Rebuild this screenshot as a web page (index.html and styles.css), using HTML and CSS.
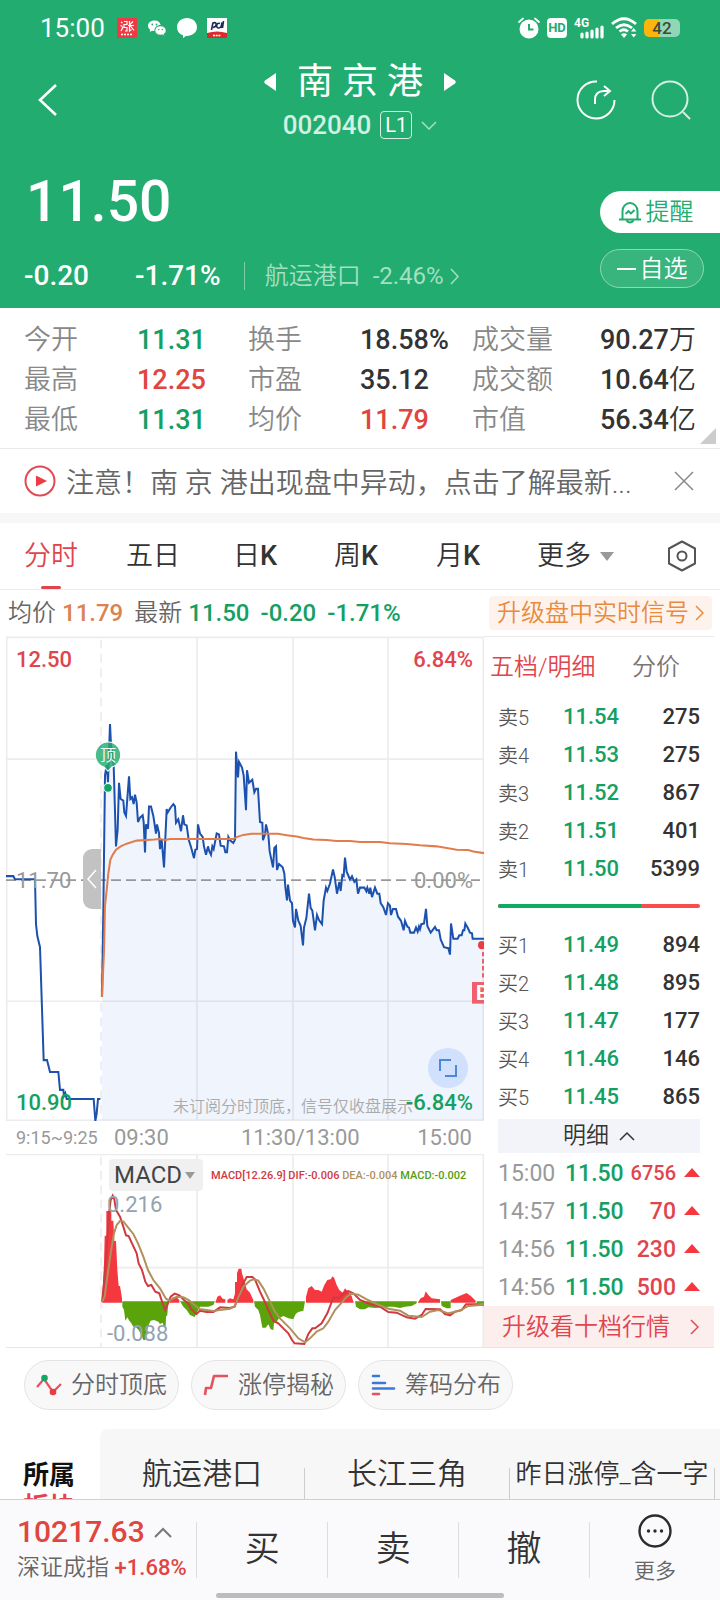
FILE: index.html
```html
<!DOCTYPE html>
<html lang="zh-CN">
<head>
    <meta charset="UTF-8">
    <meta name="viewport" content="width=device-width, initial-scale=1.0">
    <title>南京港 002040</title>
    <link rel="stylesheet" href="styles.css">
</head>
<body>
    <header class="header">
        <!-- Status bar -->
        <div class="status-bar">
            <span class="status-time">15:00</span>
            <svg width="20" height="20" viewBox="0 0 20 20">
                <rect width="20" height="20" fill="#ee3a43"/>
                <path d="M4 4l1.500 1M3.500 7.500l2 1M4 13l2-4M7 3.500h3v3H7v3h3v3.500H8M12.500 3v10l2-1.500M11 7.500h6M16 3.500l-3 3M13.500 8l3.500 4.500" fill="none" stroke="#fff" stroke-width="1.200"/>
                <path d="M4 16.500h12" stroke="#fff" stroke-width="1.500" stroke-dasharray="2 1"/>
            </svg>
            <svg width="20" height="20" viewBox="0 0 20 20">
                <path d="M7.500 2.500c-4 0-6.500 2.500-6.500 5.300 0 1.700.9 3.100 2.300 4.100l-.6 2.100 2.400-1.200c.8.200 1.600.3 2.400.3-.2-3.600 2.400-6 6.200-6C13.200 4.400 10.900 2.500 7.500 2.500z" fill="#fff"/>
                <path d="M13.500 8c-3.200 0-5.500 2-5.500 4.500S10.300 17 13.500 17c.7 0 1.300-.1 1.900-.3l2 1.100-.5-1.900c1.300-.8 2.100-2 2.100-3.400C19 10 16.700 8 13.500 8z" fill="#fff" stroke="#22ac6f" stroke-width=".6"/>
                <g fill="#22ac6f"><circle cx="5.300" cy="6.500" r=".9"/><circle cx="9.500" cy="6.500" r=".9"/><circle cx="11.800" cy="11.500" r=".7"/><circle cx="15.300" cy="11.500" r=".7"/></g>
            </svg>
            <svg width="20" height="20" viewBox="0 0 20 20">
                <path d="M10 0C4.500 0 0 3.900 0 9c0 4 2.400 7 6 8.300V20l3-2c6 .3 11-3.500 11-9 0-5.100-4.500-9-10-9z" fill="#fff"/>
            </svg>
            <svg width="20" height="20" viewBox="0 0 20 20">
                <rect width="20" height="20" fill="#fff"/>
                <path d="M0 15q10-3 20 0v5H0z" fill="#dc2b2b"/>
                <path d="M4.500 12l1.500-7.500M6 5c4-2 4.500 4 0 4.500M13 5.500c-4-1.500-4.500 5-1 4.500 2 0 2.500-2 3-5.500L14 10M16.500 3l-1 7" fill="none" stroke="#1b2a58" stroke-width="1.600"/>
                <path d="M6 17.500h8" stroke="#fff" stroke-width="1.500" stroke-dasharray="2 .7"/>
            </svg>
            <div class="status-right">
                <svg width="22" height="22" viewBox="0 0 22 22">
                    <circle cx="11" cy="12" r="9.500" fill="#fff"/>
                    <path d="M1 5l4-3.500M21 5l-4-3.500" stroke="#fff" stroke-width="1.800" stroke-linecap="round"/>
                    <path d="M11 7v5.500h4.500" fill="none" stroke="#22ac6f" stroke-width="2"/>
                </svg>
                <span class="hd-badge">HD</span>
                <svg width="30" height="22" viewBox="0 0 30 22">
                    <text x="0" y="10" class="net-label">4G</text>
                    <path d="M8 17v3M13 16v4M18 14v6M23 12v8M28 10v10" stroke="#fff" stroke-width="3.200" stroke-linecap="round"/>
                </svg>
                <svg width="26" height="22" viewBox="0 0 26 22">
                    <path d="M1 7Q13-3.500 25 7M5 11Q13 4.500 21 11M8.500 14.500Q13 11 17 14.500" fill="none" stroke="#fff" stroke-width="2.800"/>
                    <path d="M10 17.500q3-2.500 6 0l-3 3.500z" fill="#fff"/>
                    <path d="M20 14.500l2.700-3.500 2.700 3.500zM20 17l2.700 3.500 2.700-3.500z" fill="#fff"/>
                </svg>
                <span class="battery">42</span>
            </div>
        </div>

        <!-- Stock title -->
        <div class="title-bar">
            <button class="icon-btn back-btn" aria-label="返回">
                <svg width="20" height="34" viewBox="0 0 20 34"><path d="M18 2L2 17l16 15" fill="none" stroke="#fff" stroke-width="2.600"/></svg>
            </button>
            <div class="title-center">
                <div class="title-name">
                    <button class="icon-btn" aria-label="上一只">
                        <svg width="12" height="18" viewBox="0 0 12 18"><path d="M12 0v18L1 10.500q-1.500-1.500 0-3z" fill="#fff"/></svg>
                    </button>
                    <h1>南 京 港</h1>
                    <button class="icon-btn" aria-label="下一只">
                        <svg width="12" height="18" viewBox="0 0 12 18"><path d="M0 0v18l11-7.500q1.500-1.500 0-3z" fill="#fff"/></svg>
                    </button>
                </div>
                <div class="title-code">
                    <span>002040</span>
                    <span class="level-tag">L1</span>
                    <svg width="16" height="9" viewBox="0 0 16 9"><path d="M1 1l7 7 7-7" fill="none" stroke="#a5dfc4" stroke-width="1.500"/></svg>
                </div>
            </div>
            <div class="title-actions">
                <button class="icon-btn" aria-label="分享">
                    <svg width="40" height="40" viewBox="0 0 40 40" fill="none" stroke="#fff" stroke-width="2">
                        <path d="M21 1.500A18.500 18.500 0 1 0 38.500 20"/>
                        <path d="M19 24v-4q0-9 9-9h6M28 6l6 5-6 5"/>
                    </svg>
                </button>
                <button class="icon-btn" aria-label="搜索">
                    <svg width="40" height="40" viewBox="0 0 40 40" fill="none" stroke="#d3f0e2" stroke-width="2">
                        <circle cx="19" cy="19" r="17.500"/><path d="M32 32l7 7"/>
                    </svg>
                </button>
            </div>
        </div>

        <!-- Latest price -->
        <div class="quote">
            <div class="quote-left">
                <div class="price">11.50</div>
                <div class="change-row">
                    <span class="change">-0.20</span>
                    <span class="change-pct">-1.71%</span>
                    <a href="#" class="industry">航运港口 <span>-2.46%</span>
                        <svg width="9" height="17" viewBox="0 0 9 17"><path d="M1 1l7 7.500L1 16" fill="none" stroke="#a5dfc4" stroke-width="1.500"/></svg>
                    </a>
                </div>
            </div>
            <div class="quote-actions">
                <button class="remind-btn">
                    <svg width="22" height="23" viewBox="0 0 22 23" fill="none" stroke="#22ac6f" stroke-width="2">
                        <path d="M3.500 18v-8a7.500 8 0 0 1 15 0v8M0 18.500h22M7.500 19.500q3.500 4 7 0"/>
                        <path d="M6.500 13l3-3 2.500 2.500L15.500 9" stroke-width="1.800"/>
                    </svg>
                    提醒
                </button>
                <button class="watch-btn"><i class="minus"></i>自选</button>
            </div>
        </div>
    </header>

    <main class="content">
        <dl class="stats">
            <dt>今开</dt><dd class="down">11.31</dd>
            <dt>换手</dt><dd>18.58%</dd>
            <dt>成交量</dt><dd>90.27<span>万</span></dd>
            <dt>最高</dt><dd class="up">12.25</dd>
            <dt>市盈</dt><dd>35.12</dd>
            <dt>成交额</dt><dd>10.64<span>亿</span></dd>
            <dt>最低</dt><dd class="down">11.31</dd>
            <dt>均价</dt><dd class="up">11.79</dd>
            <dt>市值</dt><dd>56.34<span>亿</span></dd>
        </dl>

        <div class="notice">
            <svg width="32" height="32" viewBox="0 0 32 32">
                <circle cx="16" cy="16" r="14.500" fill="none" stroke="#e04a52" stroke-width="2"/>
                <path d="M12 10.500l11 5.500-11 5.500z" fill="#ee3a43"/>
            </svg>
            <a href="#">注意！南 京 港出现盘中异动，点击了解最新...</a>
            <button class="icon-btn" aria-label="关闭">
                <svg width="20" height="20" viewBox="0 0 20 20"><path d="M1 1l18 18M19 1L1 19" stroke="#888" stroke-width="1.500"/></svg>
            </button>
        </div>

        <!-- Period tabs -->
        <nav class="tabs">
            <button class="active">分时</button>
            <button>五日</button>
            <button>日<span>K</span></button>
            <button>周<span>K</span></button>
            <button>月<span>K</span></button>
            <button>更多<i class="caret"></i></button>
            <button aria-label="设置">
                <svg width="30" height="32" viewBox="0 0 30 32" fill="none" stroke="#555" stroke-width="2">
                    <path d="M15 1.500L28 8.500v15L15 30.500 2 23.500v-15z" stroke-linejoin="round"/><circle cx="15" cy="16" r="4.500"/>
                </svg>
            </button>
        </nav>

        <div class="info-row">
            <span>均价</span><b class="avg">11.79</b>
            <span>最新</span><b class="down">11.50</b><b class="down">-0.20</b><b class="down">-1.71%</b>
            <a href="#" class="signal-link">升级盘中实时信号
                <svg width="9" height="16" viewBox="0 0 9 16"><path d="M1 1l7 7-7 7" fill="none" stroke="#e98a3c" stroke-width="1.500"/></svg>
            </a>
        </div>

        <div class="board">
            <section class="charts">
                <!-- Intraday price -->
                <div class="price-chart">
                    <svg class="plot" viewBox="18 18 1434 1434" preserveAspectRatio="none">
                        <g class="grid-line">
                            <path d="M20 22H1450V1450H20zM20 382H1450M20 1098H1450M591 22V1450M879 22V1450M1164 22V1450"/>
                            <path d="M303 28V1450" stroke-dasharray="26 17"/>
                        </g>
                        <path class="zero-line" d="M18 740H1440"/>
                        <path class="area" d="M306 1085L310 830 315 430 320 400 324 450 330 278 333 340 341 400 348 640 353 590 357 452 362 500 370 505 373 540 378 550 387 433 391 500 396 495 401 515 405 487 410 510 414 568 420 555 428 548 431 568 435 658 438 575 444 588 447 522 453 522 460 550 468 602 471 575 477 600 480 648 485 620 492 702 500 530 512 525 520 515 525 522 528 570 535 560 543 595 549 548 553 575 560 578 566 620 573 642 582 675 591 648 594 575 600 602 608 612 618 665 624 640 633 665 637 640 641 648 650 602 657 605 662 638 672 640 681 657 685 612 690 622 700 630 705 620 708 360 714 436 717 390 726 407 731 430 738 533 741 415 747 452 757 443 763 480 774 470 780 568 787 570 789 622 798 575 805 605 809 655 819 702 828 640 831 710 837 692 848 702 853 720 861 800 864 753 870 800 876 808 885 880 888 825 895 860 902 875 909 933 912 880 919 852 927 780 932 822 937 830 945 888 951 843 957 858 966 870 971 800 978 762 982 772 990 750 999 708 1011 780 1018 745 1022 772 1027 725 1031 728 1035 673 1040 715 1050 738 1056 728 1063 745 1069 738 1074 780 1080 762 1093 762 1108 780 1111 762 1116 790 1125 762 1138 780 1142 808 1158 843 1164 808 1173 843 1179 825 1188 825 1194 848 1203 860 1211 888 1215 860 1231 895 1242 895 1257 877 1272 868 1278 825 1282 875 1292 895 1305 878 1317 888 1322 915 1332 938 1345 941 1350 960 1353 868 1360 913 1373 913 1389 888 1396 868 1404 882 1416 897 1418 913 1452 913V1450H306z"/>
                        <polyline class="price-line" points="18,728 40,728 45,737 105,737 108,870 112,905 120,938 131,1272 141,1272 150,1307 175,1307 180,1360 190,1360 192,1378 196,1370 200,1387 281,1387 286,1452 290,1430 294,1387 301,1387"/>
                        <polyline class="price-line" points="306,1085 310,830 315,430 320,400 324,450 330,278 333,340 341,400 348,640 353,590 357,452 362,500 370,505 373,540 378,550 387,433 391,500 396,495 401,515 405,487 410,510 414,568 420,555 428,548 431,568 435,658 438,575 444,588 447,522 453,522 460,550 468,602 471,575 477,600 480,648 485,620 492,702 500,530 503,540 512,525 520,515 525,522 528,570 535,560 543,595 549,548 553,575 560,578 566,620 573,642 582,675 586,650 591,648 594,575 600,602 608,612 612,640 618,665 624,640 628,655 633,665 637,640 641,648 650,602 657,605 662,638 672,640 676,657 681,657 685,612 690,622 700,630 705,620 708,360 714,436 717,390 726,407 731,430 738,533 741,415 747,452 757,443 763,480 768,470 774,470 780,568 787,570 789,622 795,605 798,575 805,605 809,655 819,702 823,645 828,640 831,710 837,692 848,702 853,720 856,760 861,800 864,753 870,800 876,808 879,860 885,880 888,825 895,860 902,875 909,933 912,880 919,852 927,780 932,822 937,830 945,888 951,843 957,858 966,870 971,800 978,762 982,772 990,750 999,708 1004,730 1011,780 1018,745 1022,772 1027,725 1031,728 1035,673 1040,715 1050,738 1056,728 1063,745 1069,738 1074,780 1080,762 1093,762 1099,773 1102,762 1108,780 1111,762 1116,790 1125,762 1132,780 1138,780 1142,808 1150,820 1158,843 1164,808 1170,815 1173,843 1179,825 1188,825 1194,848 1203,860 1211,888 1215,860 1222,877 1227,880 1231,895 1242,895 1248,880 1253,892 1257,877 1260,885 1264,870 1272,868 1278,825 1282,875 1292,895 1299,886 1305,878 1310,888 1317,888 1322,915 1332,938 1345,941 1350,960 1353,868 1360,913 1373,913 1378,903 1385,903 1389,888 1393,888 1396,868 1404,882 1410,895 1416,897 1418,913 1452,913"/>
                        <polyline class="avg-line" points="306,1085 312,950 315,815 320,770 325,720 331,680 338,665 348,650 362,640 380,632 410,623 440,621 463,620 480,618 495,621 510,618 700,618 712,612 730,606 755,603 834,603 860,607 890,611 910,615 940,620 980,621 1010,624 1050,624 1080,627 1140,627 1170,631 1220,633 1260,637 1310,640 1340,645 1370,650 1405,651 1420,655 1452,660"/>
                        <!-- top / buy signals -->
                        <path d="M313 406L324 418l11-12A38 38 0 1 0 313 406z" fill="#22ac6f" fill-opacity=".82" stroke="#fff" stroke-width="3"/>
                        <circle cx="324" cy="467" r="13" fill="#0fa564" stroke="#fff" stroke-width="3"/>
                        <path d="M1449 952V1036" stroke="#f0606c" stroke-width="6" stroke-dasharray="13 8"/>
                        <circle cx="1446" cy="932" r="12" fill="#ee3a43"/>
                        <rect x="1416" y="1041" width="36" height="64" fill="#f0606c"/>
                    </svg>
                    <span class="mark-top">顶</span>
                    <span class="mark-buy">B</span>
                    <span class="lbl lbl-top-left">12.50</span>
                    <span class="lbl lbl-top-right">6.84%</span>
                    <span class="lbl lbl-mid-left">11.70</span>
                    <span class="lbl lbl-mid-right">0.00%</span>
                    <span class="lbl lbl-bottom-left">10.90</span>
                    <span class="lbl lbl-bottom-right">-6.84%</span>
                    <span class="chart-tip">未订阅分时顶底，信号仅收盘展示</span>
                    <button class="collapse-btn" aria-label="收起竞价">
                        <svg width="10" height="20" viewBox="0 0 10 20"><path d="M9 1L1 10l8 9" fill="none" stroke="#fff" stroke-width="1.500"/></svg>
                    </button>
                    <button class="expand-btn" aria-label="全屏">
                        <svg width="20" height="20" viewBox="0 0 20 20"><path d="M2 13V2h11M7 18h11V7" fill="none" stroke="#4a8ad8" stroke-width="2"/></svg>
                    </button>
                </div>
                <div class="time-axis">
                    <small>9:15~9:25</small>
                    <span>09:30</span><span>11:30/13:00</span><span>15:00</span>
                </div>

                <!-- MACD -->
                <div class="macd-chart">
                    <svg class="plot" viewBox="18 132 1434 579">
                        <g class="grid-line">
                            <path d="M18 133H1452M303 473H1450M591 133V711M879 133V711M1164 133V711M1450 133V711"/>
                            <path d="M303 140V711" stroke-dasharray="26 17"/>
                        </g>
                        <path class="bar-up" d="M306 578L312 460 314 377H319V303H334V332H340L343 393H348L352 480 356 528H360L366 565V578zM508 578L518 562H530L538 570V578zM646 578L652 560 660 556 668 566 676 568V578zM682 578V570L690 565 700 568 705 550V516H711V490L716 476H724L726 490 732 510 740 538 750 548 760 570V578zM918 578V560L925 535 935 528 945 540H955L965 545 973 525 982 510 992 508 998 499 1003 505 1010 525 1018 540 1028 548 1035 535 1045 545 1055 558 1061 578zM1253 578L1262 565 1272 560 1277 544 1285 555 1295 565 1320 568V578zM1352 578V570L1370 562 1385 555 1400 549 1415 560 1427 572V578z"/>
                        <path class="bar-down" d="M367 574V590L372 600 376 632 382 622 388 632 394 640 400 650 408 652 416 660 424 675 430 690H436L440 668 446 645 452 632 462 630 475 635 480 642 488 638 492 650H497L498 620 502 615 505 574zM540 574L550 590 560 600 570 615 584 621 592 605 600 590H625L640 585 645 574zM762 574L765 590 775 600 780 615 787 653H797L805 643 812 658 820 660 822 640 830 635 837 625 850 618 865 625 880 628 887 612 895 606 910 602 915 574zM1065 574L1068 590 1080 598H1095L1105 592 1125 594 1165 590H1180L1200 594 1215 590 1235 588 1250 580V574zM1323 574L1325 588 1340 595H1352V574zM1430 574H1452V581H1430z"/>
                        <polyline class="dif-line" points="306,575 312,520 320,420 326,320 332,270 338,257 343,268 348,300 360,320 370,350 378,376 386,378 396,400 410,430 416,460 426,480 436,515 444,528 454,525 466,545 478,550 488,580 496,600 504,580 512,560 524,551 538,556 552,570 564,580 574,598 590,612 600,602 620,606 640,606 660,592 690,594 704,590 716,560 730,520 740,501 757,501 765,508 780,545 792,570 805,600 820,632 835,640 850,655 865,670 876,690 884,700 913,702 925,672 937,655 945,655 965,640 982,610 1000,563 1020,563 1030,550 1045,543 1060,550 1080,570 1110,582 1140,590 1165,606 1190,608 1220,622 1245,626 1265,615 1277,597 1320,598 1335,612 1350,616 1365,605 1385,600 1398,583 1430,583 1452,586"/>
                        <polyline class="dea-line" points="306,575 314,560 322,500 332,430 342,370 350,345 360,333 370,334 384,352 400,372 414,400 430,440 444,480 460,510 480,535 498,566 508,572 530,560 550,562 566,570 580,582 598,597 640,603 660,600 690,596 704,588 716,560 730,530 750,512 762,508 775,512 790,535 810,575 825,605 840,625 870,655 895,685 915,697 930,685 950,665 970,655 985,635 1005,600 1025,578 1040,560 1055,551 1075,554 1100,568 1130,582 1165,596 1200,602 1225,617 1265,621 1290,605 1315,600 1345,610 1380,602 1405,588 1452,584"/>
                    </svg>
                    <div class="macd-head">
                        <span class="macd-picker">
                            <select aria-label="指标"><option>MACD</option></select>
                            <i class="caret"></i>
                        </span>
                        <span class="macd-legend"><span class="dif">MACD[12.26.9] DIF:-0.006</span> <span class="dea">DEA:-0.004</span> <span class="bar">MACD:-0.002</span></span>
                    </div>
                    <span class="lbl macd-max">0.216</span>
                    <span class="lbl macd-min">-0.088</span>
                </div>
            </section>

            <!-- Order book -->
            <aside class="orders">
                <div class="order-tabs">
                    <button class="active">五档/明细</button>
                    <button>分价</button>
                </div>
                <table class="book">
                    <tr><th>卖5</th><td>11.54</td><td>275</td></tr>
                    <tr><th>卖4</th><td>11.53</td><td>275</td></tr>
                    <tr><th>卖3</th><td>11.52</td><td>867</td></tr>
                    <tr><th>卖2</th><td>11.51</td><td>401</td></tr>
                    <tr><th>卖1</th><td>11.50</td><td>5399</td></tr>
                </table>
                <div class="ratio"><i style="width: 71%"></i></div>
                <table class="book">
                    <tr><th>买1</th><td>11.49</td><td>894</td></tr>
                    <tr><th>买2</th><td>11.48</td><td>895</td></tr>
                    <tr><th>买3</th><td>11.47</td><td>177</td></tr>
                    <tr><th>买4</th><td>11.46</td><td>146</td></tr>
                    <tr><th>买5</th><td>11.45</td><td>865</td></tr>
                </table>
                <button class="detail-btn">明细
                    <svg width="16" height="10" viewBox="0 0 16 10"><path d="M1 9l7-7 7 7" fill="none" stroke="#333" stroke-width="1.500"/></svg>
                </button>
                <table class="trades">
                    <tr><td>15:00</td><td>11.50</td><td class="small">6756</td><td><i class="arrow-up"></i></td></tr>
                    <tr><td>14:57</td><td>11.50</td><td>70</td><td><i class="arrow-up"></i></td></tr>
                    <tr><td>14:56</td><td>11.50</td><td>230</td><td><i class="arrow-up"></i></td></tr>
                    <tr><td>14:56</td><td>11.50</td><td>500</td><td><i class="arrow-up"></i></td></tr>
                </table>
                <a href="#" class="upgrade">升级看十档行情
                    <svg width="9" height="16" viewBox="0 0 9 16"><path d="M1 1l7 7-7 7" fill="none" stroke="#e04a52" stroke-width="1.500"/></svg>
                </a>
            </aside>
        </div>

        <div class="chips">
            <button>
                <svg width="26" height="22" viewBox="0 0 26 22"><path d="M1 13l7-8 9 13 8-8" fill="none" stroke="#e5525c" stroke-width="2.200"/><circle cx="8.500" cy="4" r="3.300" fill="#17a566"/><circle cx="17" cy="18" r="3.300" fill="#ee3a43"/></svg>
                分时顶底
            </button>
            <button>
                <svg width="26" height="22" viewBox="0 0 26 22"><path d="M2 21l1-7h5l3-12h14" fill="none" stroke="#e5525c" stroke-width="2.600" stroke-linejoin="round"/></svg>
                涨停揭秘
            </button>
            <button>
                <svg width="26" height="22" viewBox="0 0 26 22" stroke-width="2.600" stroke-linecap="round"><path d="M3 2h6M3 9h12M3 14.500h21" stroke="#3d78d8"/><path d="M3 20h6" stroke="#e5525c"/></svg>
                筹码分布
            </button>
        </div>

        <section class="sectors">
            <h2>所属<br><em>板块</em></h2>
            <div class="sector-list">
                <a href="#">航运港口</a>
                <a href="#">长江三角</a>
                <a href="#" class="long">昨日涨停_含一字</a>
            </div>
        </section>
    </main>

    <!-- Bottom toolbar -->
    <footer class="toolbar">
        <a href="#" class="index">
            <span class="index-value">10217.63
                <svg width="18" height="11" viewBox="0 0 18 11"><path d="M1 10l8-8 8 8" fill="none" stroke="#777" stroke-width="2"/></svg>
            </span>
            <span class="index-name">深证成指 <b>+1.68%</b></span>
        </a>
        <button>买</button>
        <button>卖</button>
        <button>撤</button>
        <button class="more">
            <svg width="34" height="34" viewBox="0 0 34 34"><circle cx="17" cy="17" r="15.500" fill="none" stroke="#2b2b2e" stroke-width="2.400"/><g fill="#2b2b2e"><circle cx="10.500" cy="17" r="1.700"/><circle cx="17" cy="17" r="1.700"/><circle cx="23.500" cy="17" r="1.700"/></g></svg>
            更多
        </button>
        <i class="home-bar"></i>
    </footer>
</body>
</html>
```

FILE: styles.css
```css
* {
    margin: 0;
    padding: 0;
    box-sizing: border-box;
}

body {
    display: flex;
    flex-direction: column;
    height: 100vh;
    overflow: hidden;
    background: #fff;
    color: #333;
    font-family: Roboto, "Noto Sans CJK SC", sans-serif;
    font-weight: 350;
}

button,
select {
    border: none;
    background: none;
    color: inherit;
    font: inherit;
    cursor: pointer;
}

a {
    color: inherit;
    text-decoration: none;
}

svg {
    display: block;
    flex: none;
}

i,
em {
    font-style: normal;
}

.up {
    color: #e0453f;
}

.down {
    color: #14a062;
}

.caret {
    display: inline-block;
    border: 7px solid transparent;
    border-top: 9px solid #999;
    border-bottom: none;
}

.icon-btn {
    display: flex;
}

/* Header */
.header {
    flex: none;
    background: #22ac6f;
    color: #fff;
}

.status-bar {
    display: flex;
    align-items: center;
    gap: 10px;
    height: 56px;
    padding: 0 40px;
}

.status-time {
    margin-right: 2px;
    font-size: 26px;
    font-weight: 400;
}

.status-right {
    display: flex;
    align-items: center;
    gap: 7px;
    margin-left: auto;
}

.hd-badge {
    width: 20px;
    border-radius: 4px;
    background: #fff;
    color: #22ac6f;
    font-size: 13px;
    font-weight: 700;
    line-height: 20px;
    text-align: center;
}

.net-label {
    fill: #fff;
    font-size: 12px;
    font-weight: 700;
}

.battery {
    width: 36px;
    border-radius: 5px;
    background: linear-gradient(90deg, #fbb50c 42%, #90d6b7 42%);
    color: #3d4a35;
    font-size: 17px;
    font-weight: 500;
    line-height: 18px;
    text-align: center;
}

.title-bar {
    display: grid;
    grid-template-columns: 1fr auto 1fr;
    align-items: center;
    height: 88px;
    padding: 0 29px;
}

.back-btn {
    padding-left: 9px;
}

.title-name,
.title-code {
    display: flex;
    align-items: center;
    justify-content: center;
}

.title-name {
    gap: 21px;
}

.title-name h1 {
    font-size: 36px;
    font-weight: 400;
    line-height: 46px;
}

.title-code {
    gap: 9px;
    margin-top: 4px;
    color: #d3f0e2;
    font-size: 26px;
    font-weight: 500;
    line-height: 32px;
}

.level-tag {
    padding: 0 4px;
    border: 1px solid #d3f0e2;
    border-radius: 4px;
    color: #fff;
    font-size: 20px;
    font-weight: 400;
    line-height: 26px;
}

.title-actions {
    display: flex;
    justify-content: flex-end;
    gap: 35px;
}

.quote {
    display: flex;
    justify-content: space-between;
    height: 164px;
    padding-left: 24px;
}

.price {
    padding: 18px 0 0 2px;
    font-size: 57px;
    font-weight: 500;
    line-height: 80px;
}

.change-row {
    display: flex;
    align-items: center;
    margin-top: 14px;
    font-size: 28px;
    font-weight: 500;
    line-height: 40px;
}

.change {
    width: 111px;
}

.industry {
    display: flex;
    align-items: center;
    gap: 12px;
    margin-left: 23px;
    padding-left: 20px;
    border-left: 1px solid #7accaa;
    color: #a5dfc4;
    font-size: 24px;
    font-weight: 350;
    line-height: 28px;
}

.industry span {
    font-weight: 400;
}

.industry svg {
    margin-left: -6px;
}

.quote-actions {
    display: flex;
    flex-direction: column;
    gap: 16px;
    width: 120px;
    padding-top: 47px;
}

.remind-btn,
.watch-btn {
    display: flex;
    align-items: center;
    justify-content: center;
    font-size: 24px;
    line-height: 36px;
}

.remind-btn {
    gap: 5px;
    height: 42px;
    padding-right: 8px;
    border-radius: 21px 0 0 21px;
    background: #fff;
    color: #22ac6f;
}

.watch-btn {
    gap: 4px;
    height: 39px;
    margin-right: 16px;
    border: 1px solid #90d6b7;
    border-radius: 20px;
    background: #38b47d;
}

.minus {
    width: 19px;
    height: 2px;
    background: #fff;
}

/* Key figures */
.content {
    flex: 1;
    min-height: 0;
    overflow: hidden;
}

.stats {
    position: relative;
    display: grid;
    grid-template-columns: 113fr 111fr 112fr 112fr 128fr 120fr;
    height: 141px;
    padding: 12px 0 8px 24px;
    border-bottom: 1px solid #eaeaea;
    font-size: 27px;
    line-height: 40px;
}

.stats::after {
    content: '';
    position: absolute;
    right: 4px;
    bottom: 4px;
    border-bottom: 16px solid #ccc;
    border-left: 16px solid transparent;
}

.stats dt {
    color: #888;
}

.stats dd {
    font-weight: 500;
    white-space: nowrap;
}

.stats dd span {
    font-weight: 350;
}

.notice {
    display: flex;
    align-items: center;
    gap: 10px;
    height: 74px;
    padding: 0 26px 0 24px;
    border-bottom: 10px solid #f7f7f7;
    color: #666;
    font-size: 28px;
}

.notice a {
    flex: 1;
    white-space: nowrap;
}

/* Period tabs */
.tabs {
    display: grid;
    grid-template-columns: 102fr 107fr 101fr 102fr 101fr 130fr auto;
    justify-items: start;
    align-items: center;
    height: 67px;
    padding: 0 23px 0 24px;
    border-bottom: 1px solid #eaeaea;
    font-size: 27px;
}

.tabs button {
    position: relative;
    line-height: 66px;
}

.tabs span {
    font-weight: 500;
}

.tabs .active,
.order-tabs .active {
    color: #e0454d;
}

.tabs .active::after {
    content: '';
    position: absolute;
    bottom: 0;
    left: 50%;
    width: 20px;
    height: 3px;
    margin-left: -10px;
    border-radius: 2px;
    background: #e0454d;
}

.tabs .caret {
    margin: 0 0 4px 9px;
}

.info-row {
    display: flex;
    align-items: center;
    gap: 6px;
    height: 46px;
    padding: 0 8px;
    color: #666;
    font-size: 24px;
    line-height: 34px;
}

.info-row b {
    margin-right: 5px;
    font-weight: 500;
}

.info-row .avg {
    color: #d9834f;
}

.signal-link {
    display: flex;
    align-items: center;
    gap: 6px;
    margin-left: auto;
    padding: 0 8px;
    border-radius: 4px;
    background: #fef3ec;
    color: #e98a3c;
}

/* Charts */
.board {
    display: grid;
    grid-template-columns: 478fr 230fr;
    margin: 0 6px;
    border-bottom: 1px solid #e6e6e6;
}

.price-chart,
.macd-chart {
    position: relative;
}

.plot {
    width: 100%;
    height: auto;
}

.price-chart .plot {
    aspect-ratio: 478 / 485;
}

.grid-line {
    fill: none;
    stroke: #ececee;
    stroke-width: 5;
}

.zero-line {
    stroke: #999;
    stroke-width: 5;
    stroke-dasharray: 30 15;
}

.area {
    fill: #5f93ea;
    fill-opacity: .1;
}

.price-line,
.avg-line,
.dif-line,
.dea-line {
    fill: none;
    stroke: #1c51ad;
    stroke-width: 6;
}

.avg-line {
    stroke: #e27c4c;
}

.mark-top,
.mark-buy {
    position: absolute;
    color: #fff;
}

.mark-top {
    top: 108px;
    left: 94px;
    font-size: 16px;
    line-height: 24px;
}

.mark-buy {
    top: 346px;
    right: 0;
    width: 8px;
    overflow: hidden;
    font-size: 20px;
    font-weight: 700;
    line-height: 22px;
}

.lbl {
    position: absolute;
    font-size: 22px;
    font-weight: 500;
    line-height: 26px;
}

.lbl-top-left,
.lbl-top-right {
    top: 11px;
    color: #e0454d;
}

.lbl-mid-left,
.lbl-mid-right {
    top: 232px;
    color: #999;
    font-weight: 400;
}

.lbl-bottom-left,
.lbl-bottom-right {
    bottom: 5px;
    color: #14a062;
}

.lbl-top-left,
.lbl-mid-left,
.lbl-bottom-left {
    left: 10px;
}

.lbl-top-right,
.lbl-mid-right,
.lbl-bottom-right {
    right: 11px;
}

.chart-tip {
    position: absolute;
    right: 71px;
    bottom: 2px;
    color: #aaa;
    font-size: 16px;
    line-height: 24px;
}

.collapse-btn {
    position: absolute;
    top: 213px;
    left: 77px;
    display: flex;
    align-items: center;
    justify-content: center;
    width: 18px;
    height: 60px;
    border-radius: 9px 0 0 9px;
    background: #c2c2c2;
}

.expand-btn {
    position: absolute;
    right: 16px;
    bottom: 33px;
    display: flex;
    align-items: center;
    justify-content: center;
    width: 40px;
    height: 40px;
    border-radius: 50%;
    background: #d1e0fc;
}

.time-axis {
    display: grid;
    grid-template-columns: 98fr 127fr 164fr 67fr;
    align-items: center;
    height: 33px;
    padding: 0 12px 0 10px;
    color: #999;
    font-size: 22px;
    font-weight: 400;
    line-height: 33px;
    white-space: nowrap;
}

.time-axis small {
    font-size: 18px;
}

.time-axis span:last-child {
    text-align: right;
}

.macd-head {
    position: absolute;
    top: 5px;
    left: 103px;
    display: flex;
    align-items: center;
    gap: 8px;
    white-space: nowrap;
}

.macd-picker {
    display: flex;
    align-items: center;
    padding-right: 8px;
    border-radius: 4px;
    background: #f0f0f0;
}

.macd-picker select {
    width: 76px;
    padding-left: 5px;
    appearance: none;
    color: #444;
    font-size: 24px;
    font-weight: 400;
    line-height: 32px;
}

.macd-picker .caret {
    border-width: 7px 5px 0;
}

.macd-legend {
    font-size: 11px;
    font-weight: 500;
}

.dif {
    color: #d0393f;
}

.dea {
    color: #b0905c;
}

.bar {
    color: #549c10;
}

.macd-max,
.macd-min {
    left: 101px;
    color: #93a3b0;
    font-weight: 400;
}

.macd-max {
    top: 38px;
}

.macd-min {
    bottom: 0;
}

.bar-up {
    fill: #f5383f;
}

.bar-down {
    fill: #5aa30a;
}

.dif-line {
    stroke: #d0393f;
}

.dea-line {
    stroke: #b0905c;
}

/* Order book */
.orders {
    display: flex;
    flex-direction: column;
    border-top: 1px solid #eaeaea;
}

.order-tabs {
    display: flex;
    justify-content: space-between;
    padding: 0 34px 0 6px;
    color: #777;
    font-size: 24px;
    line-height: 60px;
}

.book,
.trades {
    width: 202px;
    margin-left: 14px;
    border-collapse: collapse;
    font-size: 22px;
    font-weight: 500;
}

.book tr,
.trades tr {
    height: 38px;
}

.book th {
    width: 65px;
    color: #555;
    font-size: 20px;
    font-weight: 350;
    text-align: left;
}

.book td:nth-child(2),
.trades td:nth-child(2) {
    color: #14a062;
}

.book td:last-child,
.trades td:nth-child(3),
.trades td:last-child {
    text-align: right;
}

.ratio {
    height: 4px;
    margin: 17px 14px;
    border-radius: 2px;
    background: #fb4b4b;
}

.ratio i {
    display: block;
    height: 4px;
    border-radius: 2px 0 0 2px;
    background: #0fab60;
}

.detail-btn {
    display: flex;
    align-items: center;
    justify-content: center;
    gap: 10px;
    height: 34px;
    margin: 4px 14px 1px;
    background: #f3f4f9;
    font-size: 23px;
    line-height: 34px;
}

.trades {
    font-size: 23px;
}

.trades td:first-child {
    width: 67px;
    color: #999;
    font-weight: 400;
}

.trades td:nth-child(3) {
    color: #e0454d;
}

.trades td:last-child {
    width: 24px;
}

.trades .small {
    font-size: 20px;
}

.arrow-up {
    display: inline-block;
    margin-bottom: 4px;
    border: 8px solid transparent;
    border-top: none;
    border-bottom: 9px solid #f5383f;
}

.upgrade {
    display: flex;
    flex: 1;
    align-items: center;
    justify-content: space-between;
    padding: 0 15px 0 18px;
    background: #fdeeee;
    color: #e0454d;
    font-size: 24px;
    line-height: 36px;
}

/* Feature chips */
.chips {
    display: flex;
    gap: 12px;
    padding: 12px 24px 19px;
}

.chips button {
    display: flex;
    align-items: center;
    gap: 9px;
    height: 50px;
    padding: 0 11px;
    border: 1px solid #e4e4e4;
    border-radius: 25px;
    background: #f8f8f8;
    color: #666;
    font-size: 24px;
    line-height: 36px;
}

/* Sectors */
.sectors {
    display: flex;
}

.sectors h2 {
    width: 100px;
    padding: 30px 0 0 23px;
    color: #111;
    font-size: 26px;
    font-weight: 700;
    line-height: 32px;
}

.sectors em {
    color: #e0454d;
}

.sector-list {
    display: flex;
    flex: 1;
    padding: 39px 5px 0 0;
    border-radius: 8px 0 0;
    background: #f7f7f7;
    font-size: 30px;
}

.sector-list a {
    flex: 1 1 0;
    height: 60px;
    border-right: 1px solid #ccc;
    line-height: 12px;
    text-align: center;
    white-space: nowrap;
}

.sector-list .long {
    font-size: 26px;
}

/* Bottom toolbar */
.toolbar {
    position: relative;
    display: grid;
    flex: none;
    grid-template-rows: 56px;
    grid-template-columns: 3fr 2fr 2fr 2fr 2fr;
    height: 101px;
    padding: 22px 0;
    border-top: 1px solid #d0d0d2;
    background: #fafafc;
}

.toolbar > button {
    border-left: 1px solid #ddd;
    font-size: 35px;
    line-height: 56px;
}

.toolbar .index {
    display: flex;
    flex-direction: column;
    justify-content: center;
    padding-left: 17px;
    white-space: nowrap;
}

.index-value {
    display: flex;
    align-items: center;
    gap: 9px;
    color: #e0453f;
    font-size: 30px;
    font-weight: 500;
    line-height: 36px;
}

.index-name {
    color: #666;
    font-size: 23px;
    line-height: 36px;
}

.index-name b {
    color: #e0453f;
    font-size: 22px;
    font-weight: 500;
}

.toolbar .more {
    display: flex;
    flex-direction: column;
    align-items: center;
    justify-content: center;
    gap: 8px;
    color: #666;
    font-size: 21px;
    line-height: 30px;
}

.home-bar {
    position: absolute;
    bottom: 2px;
    left: 30%;
    width: 40%;
    height: 5px;
    border-radius: 3px;
    background: #bcbcbe;
}
```
